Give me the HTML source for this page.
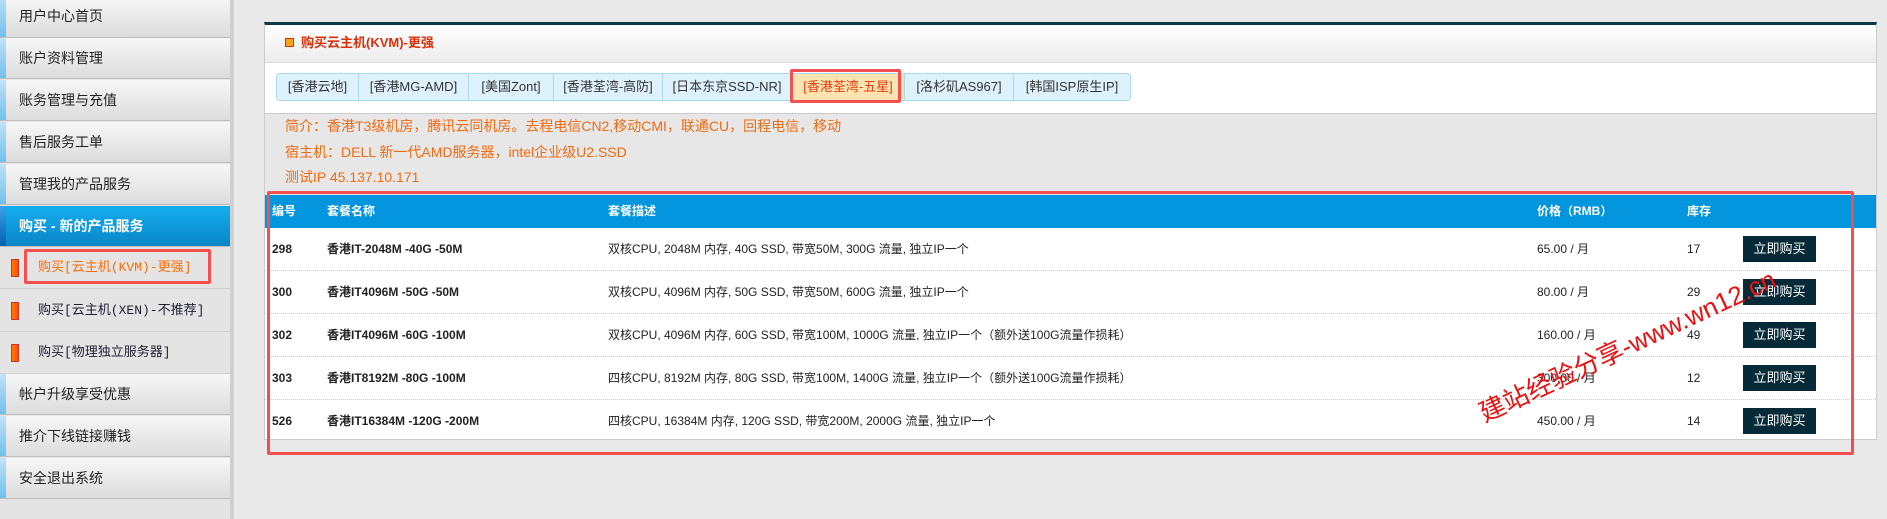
<!DOCTYPE html>
<html><head><meta charset="utf-8"><style>
*{margin:0;padding:0;box-sizing:border-box}
body{width:1887px;height:519px;overflow:hidden;background:#e9e9e9;font-family:"Liberation Sans","Noto Sans CJK SC",sans-serif;position:relative}
.sb{position:absolute;left:0;top:0;width:234px;height:519px;background:#e4e4e4;border-right:4px solid #cfcfcf}
.it{position:absolute;left:0;width:230px;height:41px;background:linear-gradient(#f7f7f7,#dcdcdc);border-bottom:1px solid #bdbdbd;font-size:14px;color:#222;line-height:41px;padding-left:19px}
.it:before{content:"";position:absolute;left:0;top:0;width:6px;height:100%;background:linear-gradient(#bfe3f7,#6fc0ec)}
.act{background:linear-gradient(#14aef0,#0a86c6);color:#fff;font-weight:bold}
.act:before{background:linear-gradient(#3aa0e8,#0560b0)}
.sub{position:absolute;left:0;width:230px;height:42px;font-size:13px;color:#223;line-height:42px;padding-left:38px;border-bottom:1px solid #cfcfcf;font-family:"Liberation Mono","Noto Sans CJK SC",monospace}
.sub i{position:absolute;left:11px;top:12px;width:8px;height:18px;background:linear-gradient(90deg,#ff7a00,#ff4d00);border:1px solid #c33}
.panel{position:absolute;left:264px;top:22px;width:1613px;height:418px;background:#fff;border-top:3px solid #0d3a48;border-left:1px solid #ccc;border-right:1px solid #ccc;border-bottom:1px solid #ccc}
.hd{height:38px;background:linear-gradient(#fff,#ececec);border-bottom:1px solid #ddd;font-size:13px;font-weight:bold;color:#d9300a;line-height:36px;padding-left:36px;position:relative}
.hd i{position:absolute;left:20px;top:13px;width:9px;height:9px;border:1px solid #d9300a;background:#f9a21b}
.tabs{position:absolute;left:11px;top:48px;height:28px;display:flex;border:1px solid #a9d8f0;border-radius:4px;background:#def2fd}
.tabs span{font-size:13px;color:#333;line-height:26px;padding:0 0;text-align:center;border-right:1px solid #a9d8f0}
.intro{position:absolute;left:0;top:88px;width:1611px;height:82px;background:#e7e7e7;border-top:1px solid #ccc;color:#f26a10;font-size:14px;padding-left:20px}
.intro div{height:25.5px;line-height:25px}
.th{position:absolute;left:0;top:170px;width:1611px;height:33px;background:#0396de;color:#fff;font-weight:bold;font-size:12px;line-height:32px}
.row{position:absolute;left:0;width:1611px;height:43px;border-bottom:1px dotted #ccc;font-size:12px;color:#222;line-height:43px}
.c{position:absolute;top:0}
.b{font-weight:bold}
.btn{position:absolute;left:1478px;top:8px;width:73px;height:26px;background:#062a38;color:#fff;font-size:13px;line-height:26px;text-align:center}
.red{position:absolute;border:3px solid #f25050;border-radius:2px}
.wm{position:absolute;left:1487px;top:398px;height:30px;line-height:30px;transform:rotate(-25deg);transform-origin:0 100%;color:#ec1010;font-size:26px;white-space:nowrap;font-family:"Liberation Sans","Noto Sans CJK SC",sans-serif}
</style></head><body>
<div class="sb">
<div class="it" style="top:-4px;height:42px;line-height:40px">用户中心首页</div>
<div class="it" style="top:38px">账户资料管理</div>
<div class="it" style="top:80px">账务管理与充值</div>
<div class="it" style="top:122px">售后服务工单</div>
<div class="it" style="top:164px">管理我的产品服务</div>
<div class="it act" style="top:206px">购买 - 新的产品服务</div>
<div class="sub" style="top:247px;color:#ff6a00"><i></i>购买[云主机(KVM)-更强]</div>
<div class="sub" style="top:290px"><i></i>购买[云主机(XEN)-不推荐]</div>
<div class="sub" style="top:332px"><i></i>购买[物理独立服务器]</div>
<div class="it" style="top:374px">帐户升级享受优惠</div>
<div class="it" style="top:416px">推介下线链接赚钱</div>
<div class="it" style="top:458px">安全退出系统</div>
</div>
<div class="red" style="left:24px;top:249px;width:187px;height:35px"></div>
<div class="panel">
<div class="hd"><i></i>购买云主机(KVM)-更强</div>
<div class="tabs">
<span style="width:82px">[香港云地]</span>
<span style="width:110px">[香港MG-AMD]</span>
<span style="width:85px">[美国Zont]</span>
<span style="width:109px">[香港荃湾-高防]</span>
<span style="width:129px">[日本东京SSD-NR]</span>
<span style="width:113px;background:#ffe3b0;color:#e43a10">[香港荃湾-五星]</span>
<span style="width:109px">[洛杉矶AS967]</span>
<span style="width:116px;border-right:none">[韩国ISP原生IP]</span>
</div>
<div class="intro"><div>简介：香港T3级机房，腾讯云同机房。去程电信CN2,移动CMI，联通CU，回程电信，移动</div><div>宿主机：DELL 新一代AMD服务器，intel企业级U2.SSD</div><div>测试IP 45.137.10.171</div></div>
<div class="th"><span class="c" style="left:7px">编号</span><span class="c" style="left:62px">套餐名称</span><span class="c" style="left:343px">套餐描述</span><span class="c" style="left:1272px">价格（RMB）</span><span class="c" style="left:1422px">库存</span></div>
<div class="row" style="top:203px"><span class="c b" style="left:7px">298</span><span class="c b" style="left:62px">香港IT-2048M -40G -50M</span><span class="c" style="left:343px">双核CPU, 2048M 内存, 40G SSD, 带宽50M, 300G 流量, 独立IP一个</span><span class="c" style="left:1272px">65.00 / 月</span><span class="c" style="left:1422px">17</span><div class="btn">立即购买</div></div>
<div class="row" style="top:246px"><span class="c b" style="left:7px">300</span><span class="c b" style="left:62px">香港IT4096M -50G -50M</span><span class="c" style="left:343px">双核CPU, 4096M 内存, 50G SSD, 带宽50M, 600G 流量, 独立IP一个</span><span class="c" style="left:1272px">80.00 / 月</span><span class="c" style="left:1422px">29</span><div class="btn">立即购买</div></div>
<div class="row" style="top:289px"><span class="c b" style="left:7px">302</span><span class="c b" style="left:62px">香港IT4096M -60G -100M</span><span class="c" style="left:343px">双核CPU, 4096M 内存, 60G SSD, 带宽100M, 1000G 流量, 独立IP一个（额外送100G流量作损耗）</span><span class="c" style="left:1272px">160.00 / 月</span><span class="c" style="left:1422px">49</span><div class="btn">立即购买</div></div>
<div class="row" style="top:332px"><span class="c b" style="left:7px">303</span><span class="c b" style="left:62px">香港IT8192M -80G -100M</span><span class="c" style="left:343px">四核CPU, 8192M 内存, 80G SSD, 带宽100M, 1400G 流量, 独立IP一个（额外送100G流量作损耗）</span><span class="c" style="left:1272px">300.00 / 月</span><span class="c" style="left:1422px">12</span><div class="btn">立即购买</div></div>
<div class="row" style="top:375px;border-bottom:none"><span class="c b" style="left:7px">526</span><span class="c b" style="left:62px">香港IT16384M -120G -200M</span><span class="c" style="left:343px">四核CPU, 16384M 内存, 120G SSD, 带宽200M, 2000G 流量, 独立IP一个</span><span class="c" style="left:1272px">450.00 / 月</span><span class="c" style="left:1422px">14</span><div class="btn">立即购买</div></div>
</div>
<div class="red" style="left:267px;top:191px;width:1587px;height:264px"></div>
<div class="red" style="left:790px;top:69px;width:111px;height:34px"></div>
<div class="wm">建站经验分享-www.wn12.cn</div>
</body></html>
